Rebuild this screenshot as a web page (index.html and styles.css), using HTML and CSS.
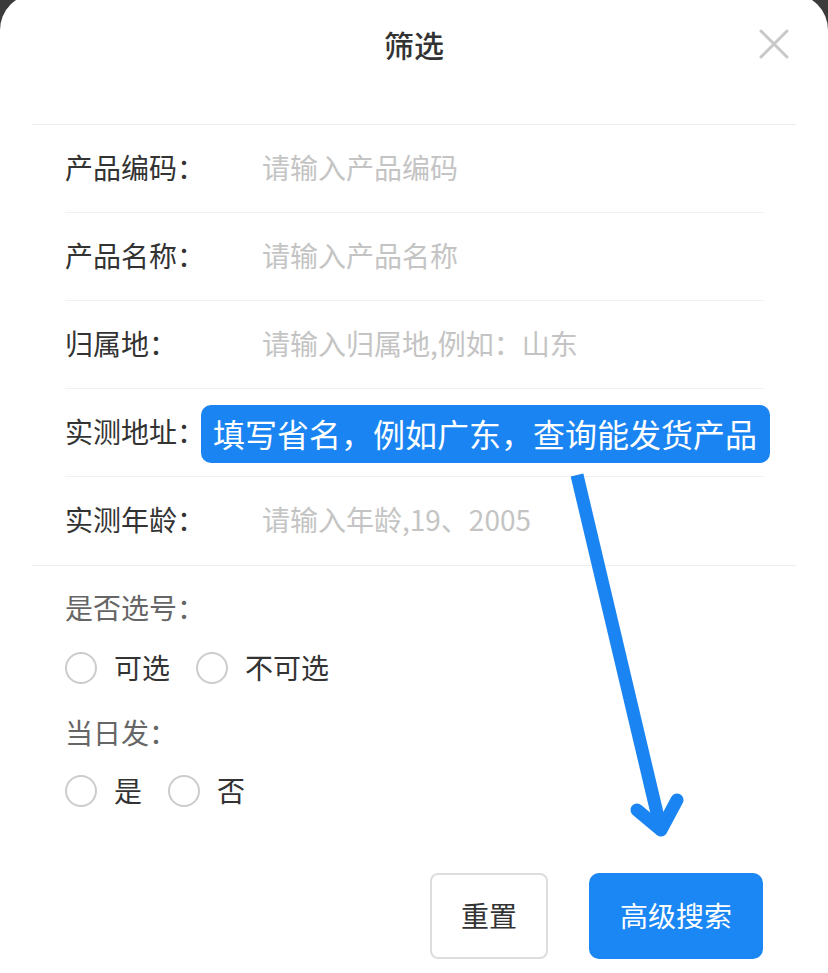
FILE: index.html
```html
<!DOCTYPE html>
<html lang="zh-CN">
<head>
<meta charset="utf-8">
<title>筛选</title>
<link rel="stylesheet" href="styles.css">
</head>
<body>
<div class="sheet">
  <div class="header">
    <div class="title">筛选</div>
    <svg class="close" width="30" height="30" viewBox="0 0 30 30"><path d="M2 2 L28 28 M28 2 L2 28" stroke="#c8c8c8" stroke-width="3" stroke-linecap="round" fill="none"/></svg>
  </div>
  <div class="form">
    <div class="row"><div class="label">产品编码：</div><div class="ph">请输入产品编码</div></div>
    <div class="row"><div class="label">产品名称：</div><div class="ph">请输入产品名称</div></div>
    <div class="row"><div class="label">归属地：</div><div class="ph">请输入归属地,例如：山东</div></div>
    <div class="row"><div class="label">实测地址：</div><div class="ph"></div><div class="tip">填写省名，例如广东，查询能发货产品</div></div>
    <div class="row last"><div class="label">实测年龄：</div><div class="ph">请输入年龄,19、2005</div></div>
  </div>
  <div class="options">
    <div class="sec-label first">是否选号：</div>
    <div class="radios">
      <div class="opt"><span class="circle"></span><span>可选</span></div>
      <div class="opt"><span class="circle"></span><span>不可选</span></div>
    </div>
    <div class="sec-label second">当日发：</div>
    <div class="radios second">
      <div class="opt"><span class="circle"></span><span>是</span></div>
      <div class="opt"><span class="circle"></span><span>否</span></div>
    </div>
  </div>
  <div class="footer">
    <div class="btn reset">重置</div>
    <div class="btn search">高级搜索</div>
  </div>
</div>
<svg class="arrow" width="828" height="973" viewBox="0 0 828 973">
  <path d="M577 475 L661 830" stroke="#1a84f2" stroke-width="13" fill="none" stroke-linecap="butt"/>
  <path d="M637 810 L661 830 L677 800" stroke="#1a84f2" stroke-width="13" fill="none" stroke-linecap="round" stroke-linejoin="round"/>
</svg>
</body>
</html>
```
FILE: styles.css
```css
html, body {
  margin: 0;
  padding: 0;
}
body {
  width: 828px;
  height: 973px;
  overflow: hidden;
  position: relative;
  background: #3b3b3b;
  font-family: "Noto Sans CJK SC", "Noto Sans", sans-serif;
  color: #333;
}
.sheet {
  margin-top: -6px;
  height: 979px;
  background: #fff;
  border-radius: 36px 36px 0 0;
}
.header {
  position: relative;
  box-sizing: border-box;
  height: 131px;
  margin: 0 32px;
  padding-top: 30px;
  border-bottom: 1px solid #eeeeee;
  text-align: center;
}
.title {
  font-size: 30px;
  line-height: 40px;
  font-weight: 500;
  color: #333;
}
.close {
  position: absolute;
  right: 7px;
  top: 35px;
}
.form {
  margin: 0 32px;
  border-bottom: 1px solid #eeeeee;
}
.row {
  position: relative;
  box-sizing: border-box;
  height: 88px;
  margin: 0 33px;
  padding-bottom: 4px;
  display: flex;
  align-items: center;
  border-bottom: 1px solid #f0f0f0;
  font-size: 28px;
}
.row.last {
  border-bottom: none;
}
.label {
  width: 197px;
  flex: none;
  color: #333;
}
.ph {
  color: #c4c4c4;
}
.tip {
  position: absolute;
  left: 136px;
  top: 16px;
  width: 569px;
  height: 58px;
  box-sizing: border-box;
  padding-left: 12px;
  padding-bottom: 3px;
  display: flex;
  align-items: center;
  background: #1a84f2;
  border-radius: 10px;
  color: #fff;
  font-size: 32px;
  white-space: nowrap;
}
.options {
  padding: 0 65px;
  font-size: 28px;
}
.sec-label {
  color: #666;
  line-height: 40px;
}
.sec-label.first {
  margin-top: 21px;
}
.sec-label.second {
  margin-top: 24px;
}
.radios {
  display: flex;
  align-items: center;
  height: 40px;
  margin-top: 21px;
}
.radios.second {
  margin-top: 19px;
}
.opt {
  display: flex;
  align-items: center;
  margin-right: 26px;
  color: #333;
}
.opt span:last-child {
  position: relative;
  top: -1px;
}
.circle {
  display: inline-block;
  box-sizing: border-box;
  width: 32px;
  height: 32px;
  border: 2px solid #cccccc;
  border-radius: 50%;
  margin-right: 17px;
}
.footer {
  display: flex;
  justify-content: flex-end;
  gap: 41px;
  padding: 0 65px;
  margin-top: 62px;
}
.btn {
  box-sizing: border-box;
  height: 86px;
  padding-bottom: 3px;
  display: flex;
  align-items: center;
  justify-content: center;
  font-size: 28px;
}
.reset {
  width: 118px;
  border: 2px solid #dddddd;
  border-radius: 8px;
  color: #333;
}
.search {
  width: 174px;
  background: #1a87f5;
  border-radius: 10px;
  color: #fff;
}
.arrow {
  position: absolute;
  left: 0;
  top: 0;
  pointer-events: none;
}
```
